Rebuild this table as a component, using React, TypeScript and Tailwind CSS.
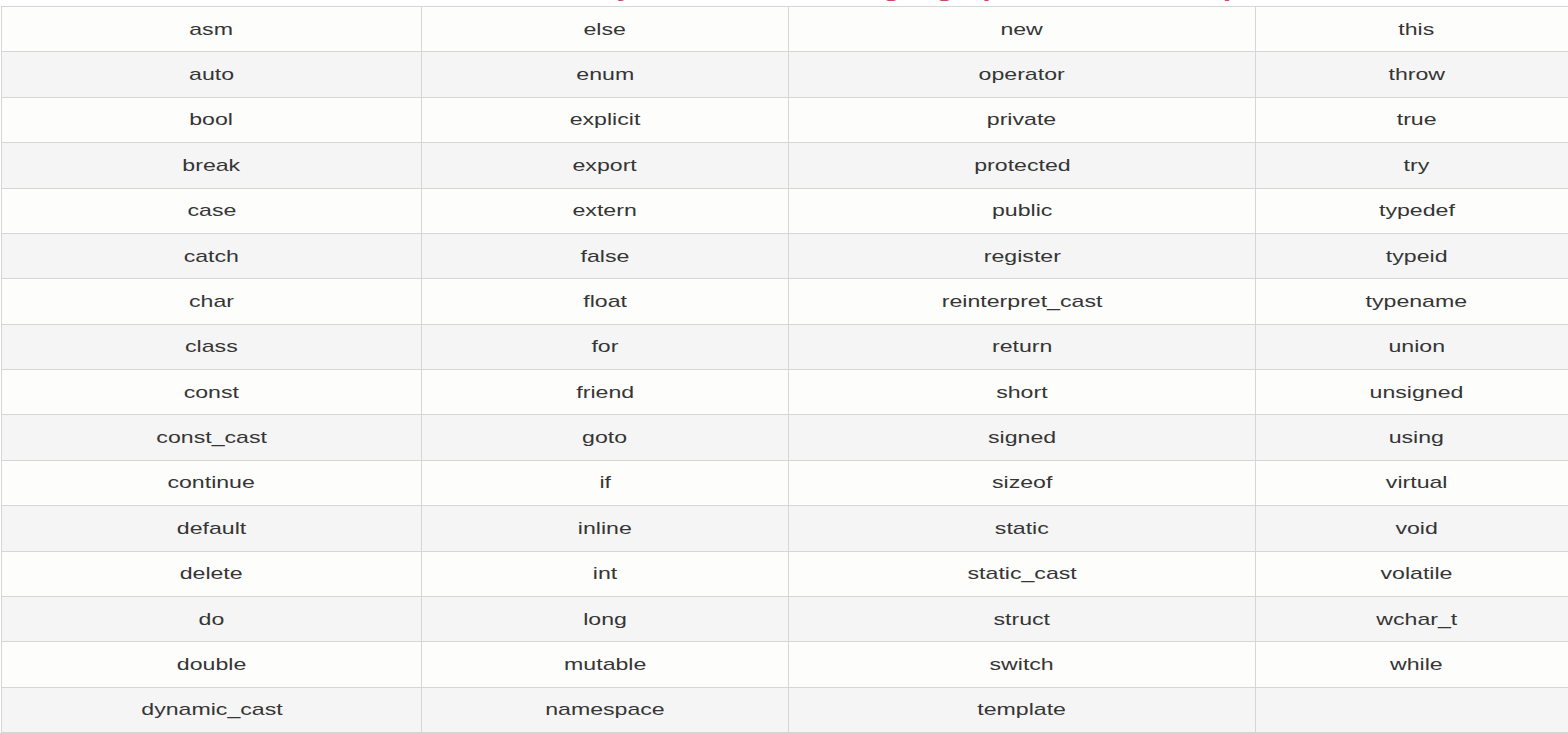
import React from 'react';

const rows: string[][] = [
    ['asm', 'else', 'new', 'this'],
    ['auto', 'enum', 'operator', 'throw'],
    ['bool', 'explicit', 'private', 'true'],
    ['break', 'export', 'protected', 'try'],
    ['case', 'extern', 'public', 'typedef'],
    ['catch', 'false', 'register', 'typeid'],
    ['char', 'float', 'reinterpret_cast', 'typename'],
    ['class', 'for', 'return', 'union'],
    ['const', 'friend', 'short', 'unsigned'],
    ['const_cast', 'goto', 'signed', 'using'],
    ['continue', 'if', 'sizeof', 'virtual'],
    ['default', 'inline', 'static', 'void'],
    ['delete', 'int', 'static_cast', 'volatile'],
    ['do', 'long', 'struct', 'wchar_t'],
    ['double', 'mutable', 'switch', 'while'],
    ['dynamic_cast', 'namespace', 'template', ''],
];

const App: React.FC = () => {
    return (
        <div className="w-[1568px] h-[733px] overflow-hidden bg-white font-['Liberation_Sans',Arial,sans-serif]">
            {/* Heading above the table, scrolled mostly out of view */}
            <div className="h-[6px] overflow-hidden flex justify-center">
                <div className="-mt-[26px] h-[30px] leading-[30px] text-[22px] font-bold text-[#c4163c] opacity-80 whitespace-nowrap scale-x-[1.36] origin-center pl-[60px]">
                    List of C++ Keywords in C++ Language (Reserved Words)
                </div>
            </div>

            {/* Keyword table */}
            <div className="pl-[1px]">
                <div className="grid grid-cols-[420px_367px_467px_322px] auto-rows-[45.375px] border-t border-l border-[#d6d6d6] w-max">
                    {rows.map((row, i) =>
                        row.map((word, j) => (
                            <div
                                key={`${i}-${j}`}
                                className={`flex items-center justify-center border-r border-b border-[#d6d6d6] ${i % 2 === 0 ? 'bg-[#fdfdfc]' : 'bg-[#f5f5f5]'}`}
                            >
                                <span className="inline-block scale-x-[1.36] text-[17px] text-[#353535] leading-none">
                                    {word}
                                </span>
                            </div>
                        ))
                    )}
                </div>
            </div>
        </div>
    );
};

export default App;
